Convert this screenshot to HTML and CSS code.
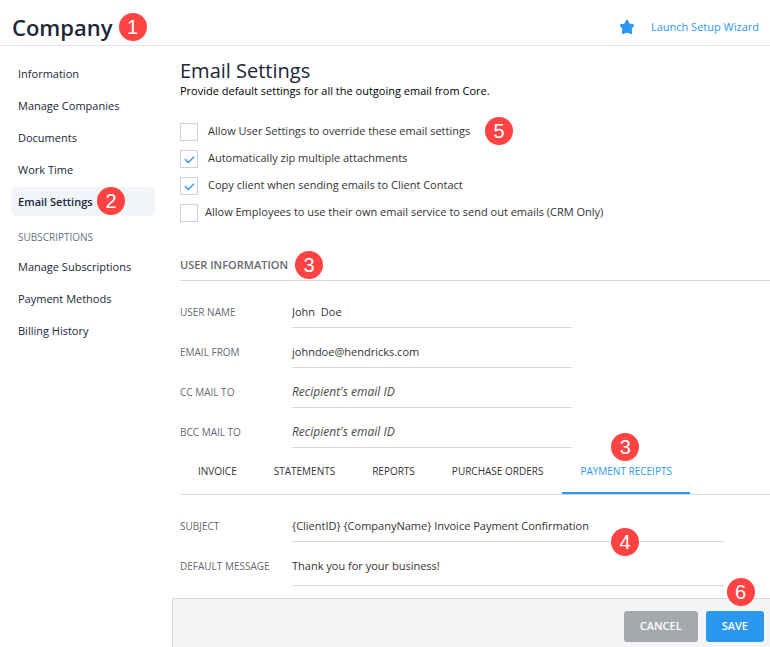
FILE: index.html
```html
<!DOCTYPE html>
<html lang="en">
    <head>
        <meta charset="UTF-8" />
        <meta name="viewport" content="width=device-width, initial-scale=1.0" />
        <title>Company - Email Settings</title>
        <link rel="stylesheet" href="styles.css">
    </head>
    <body>
        <header class="header">
            <h1>Company</h1>
            <span class="badge">1</span>
            <svg class="star" viewBox="0 0 16 16" width="16" height="16" aria-hidden="true">
                <path d="M8 1.8 L9.9 5.4 L14.2 6.2 L11.7 9.6 L12.2 14 L8 12.6 L3.8 14 L4.3 9.6 L1.8 6.2 L6.1 5.4 Z" />
            </svg>
            <a class="wizard-link" href="#">Launch Setup Wizard</a>
        </header>

        <div class="layout">
            <nav class="sidebar">
                <a href="#">Information</a>
                <a href="#">Manage Companies</a>
                <a href="#">Documents</a>
                <a href="#">Work Time</a>
                <a href="#" class="active">Email Settings <span class="badge">2</span></a>
                <h3>SUBSCRIPTIONS</h3>
                <a href="#">Manage Subscriptions</a>
                <a href="#">Payment Methods</a>
                <a href="#">Billing History</a>
            </nav>

            <form class="main">
                <div class="content">
                    <h2>Email Settings</h2>
                    <p class="intro">Provide default settings for all the outgoing email from Core.</p>

                    <div class="options">
                        <div class="option">
                            <input type="checkbox" id="allowOverride" />
                            <label for="allowOverride">Allow User Settings to override these email settings</label>
                            <span class="badge">5</span>
                        </div>
                        <div class="option">
                            <input type="checkbox" id="zipAttachments" checked />
                            <label for="zipAttachments">Automatically zip multiple attachments</label>
                        </div>
                        <div class="option">
                            <input type="checkbox" id="copyClient" checked />
                            <label for="copyClient">Copy client when sending emails to Client Contact</label>
                        </div>
                        <div class="option crm-option">
                            <input type="checkbox" id="ownService" />
                            <label for="ownService">Allow Employees to use their own email service to send out emails (CRM Only)</label>
                        </div>
                    </div>

                    <div class="section-title">
                        <h3>USER INFORMATION</h3>
                        <span class="badge">3</span>
                    </div>

                    <div class="fields">
                        <div class="field">
                            <label for="userName">USER NAME</label>
                            <input type="text" id="userName" value="John  Doe" />
                        </div>
                        <div class="field">
                            <label for="emailFrom">EMAIL FROM</label>
                            <input type="text" id="emailFrom" value="johndoe@hendricks.com" />
                        </div>
                        <div class="field">
                            <label for="ccMail">CC MAIL TO</label>
                            <input type="text" id="ccMail" placeholder="Recipient's email ID" />
                        </div>
                        <div class="field">
                            <label for="bccMail">BCC MAIL TO</label>
                            <input type="text" id="bccMail" placeholder="Recipient's email ID" />
                        </div>
                    </div>

                    <div class="tabs">
                        <button type="button">INVOICE</button>
                        <button type="button">STATEMENTS</button>
                        <button type="button">REPORTS</button>
                        <button type="button">PURCHASE ORDERS</button>
                        <button type="button" class="active">PAYMENT RECEIPTS<span class="badge">3</span></button>
                    </div>

                    <div class="fields message-fields">
                        <div class="field">
                            <label for="subject">SUBJECT</label>
                            <input type="text" id="subject" value="{ClientID} {CompanyName} Invoice Payment Confirmation" />
                            <span class="badge">4</span>
                        </div>
                        <div class="field">
                            <label for="message">DEFAULT MESSAGE</label>
                            <textarea id="message" rows="1">Thank you for your business!</textarea>
                        </div>
                    </div>
                </div>

                <footer class="actions">
                    <button type="button" class="cancel">CANCEL</button>
                    <button type="button" class="save">SAVE<span class="badge">6</span></button>
                </footer>
            </form>
        </div>
    </body>
</html>
```
FILE: styles.css
```css
* {
    box-sizing: border-box;
}

body {
    margin: 0;
    min-height: 100vh;
    display: flex;
    flex-direction: column;
    font-family: "Open Sans", sans-serif;
    font-size: 11px;
    line-height: 16px;
    color: #333;
    background: #fff;
}

h1,
h2,
h3,
p {
    margin: 0;
}

a {
    color: inherit;
    text-decoration: none;
}

input,
textarea,
button {
    font: inherit;
    color: inherit;
    margin: 0;
}

.badge {
    width: 28px;
    height: 28px;
    border-radius: 50%;
    background: #ff4242;
    color: #fff;
    font-family: "Liberation Sans", sans-serif;
    font-size: 20px;
    font-weight: 400;
    line-height: 28px;
    text-align: center;
}

.header {
    display: flex;
    align-items: center;
    height: 46px;
    padding: 8px 11px 0 12px;
    border-bottom: 1px solid #e1e3ee;
}

.header h1 {
    font-size: 22px;
    font-weight: 600;
    line-height: 32px;
    color: #20263a;
    margin-right: 6px;
}

.star {
    margin-left: auto;
    margin-right: 16px;
    fill: #2b98f0;
    stroke: #2b98f0;
    stroke-width: 2;
    stroke-linejoin: round;
}

.wizard-link {
    color: #2b98f0;
}

.layout {
    flex: 1;
    display: flex;
}

.sidebar {
    flex: none;
    width: 172px;
    padding: 13px 17px 0 11px;
    display: flex;
    flex-direction: column;
    gap: 3px;
    color: #20263a;
}

.sidebar a {
    position: relative;
    padding: 7px 7px 6px;
    border-radius: 6px;
}

.sidebar .active {
    background: #f1f4f9;
    font-weight: 600;
}

.sidebar .badge {
    position: absolute;
    left: 86px;
    top: 0;
}

.sidebar h3 {
    padding: 10px 7px 4px;
    font-size: 10px;
    font-weight: 400;
    color: #66738a;
}

.main {
    flex: 1;
    min-width: 0;
    display: flex;
    flex-direction: column;
}

.content {
    padding: 11px 0 12px 8px;
}

.content h2 {
    font-size: 20px;
    font-weight: 400;
    line-height: 28px;
    color: #20263a;
}

.intro {
    line-height: 12px;
    color: #000;
}

.options {
    margin-top: 26px;
    display: flex;
    flex-direction: column;
    gap: 9px;
}

.option {
    height: 18px;
    display: flex;
    align-items: center;
    gap: 10px;
}

.option label {
    padding-bottom: 2px;
}

.option .badge {
    margin: 0 5px 2px;
}

.crm-option {
    gap: 7px;
}

.option input {
    appearance: none;
    flex: none;
    width: 18px;
    height: 18px;
    border: 1px solid #ccd3e0;
    background: #fff;
    display: grid;
    place-items: center;
}

.option input:checked::before {
    content: "";
    width: 9px;
    height: 5px;
    border-left: 2px solid #459ff0;
    border-bottom: 2px solid #459ff0;
    transform: translateY(-1px) rotate(-45deg) scale(0.8);
}

.section-title {
    display: flex;
    align-items: center;
    gap: 7px;
    margin-top: 29px;
    padding-bottom: 1px;
    border-bottom: 1px solid #d3d9e5;
}

.section-title h3 {
    font-size: 11px;
    font-weight: 600;
    color: #66696f;
}

.fields {
    padding-top: 20px;
}

.field {
    position: relative;
    display: grid;
    grid-template-columns: 112px minmax(0, 280px);
    align-items: start;
    margin-bottom: 13px;
}

.field label {
    padding-top: 3px;
    font-size: 10px;
    color: #66696f;
}

.field input,
.field textarea {
    width: 100%;
    height: 27px;
    padding: 2px 0 8px;
    border: none;
    border-bottom: 1px solid #d3d9e5;
    border-radius: 0;
    background: none;
    line-height: 16px;
    outline: none;
    white-space: pre;
    resize: none;
    overflow: hidden;
}

.field input::placeholder {
    color: #4a4a4a;
    font-size: 12px;
    font-style: italic;
    opacity: 1;
}

.tabs {
    display: flex;
    gap: 1px;
    margin-top: -13px;
    border-bottom: 1px solid #d3d9e5;
}

.tabs button {
    position: relative;
    height: 46px;
    padding: 2px 18px 0;
    border: none;
    border-bottom: 2px solid transparent;
    background: none;
    font-size: 10px;
    white-space: nowrap;
    cursor: pointer;
}

.tabs .active {
    color: #2b98f0;
    border-bottom-color: #2b98f0;
}

.tabs .badge {
    position: absolute;
    left: 49px;
    top: -15px;
}

.message-fields .field {
    grid-template-columns: 112px minmax(0, 432px);
}

.message-fields .badge {
    position: absolute;
    left: 431px;
    top: 13px;
}

.message-fields .field:last-child {
    margin-bottom: 0;
}

.message-fields textarea {
    height: 31px;
    padding-top: 3px;
}

.actions {
    flex: 1;
    display: flex;
    justify-content: flex-end;
    align-items: flex-start;
    gap: 8px;
    padding: 12px 6px 5px;
    background: #f3f4f6;
    border-top: 1px solid #d3d9e5;
    border-left: 1px solid #d3d9e5;
}

.actions button {
    position: relative;
    height: 31px;
    padding: 0 16px 2px;
    border: none;
    border-radius: 3px;
    color: #fff;
    font-weight: 600;
    cursor: pointer;
}

.cancel {
    background: #a5a8ad;
}

.save {
    background: #2b98f0;
}

.actions .badge {
    position: absolute;
    left: 21px;
    top: -33px;
}
```
